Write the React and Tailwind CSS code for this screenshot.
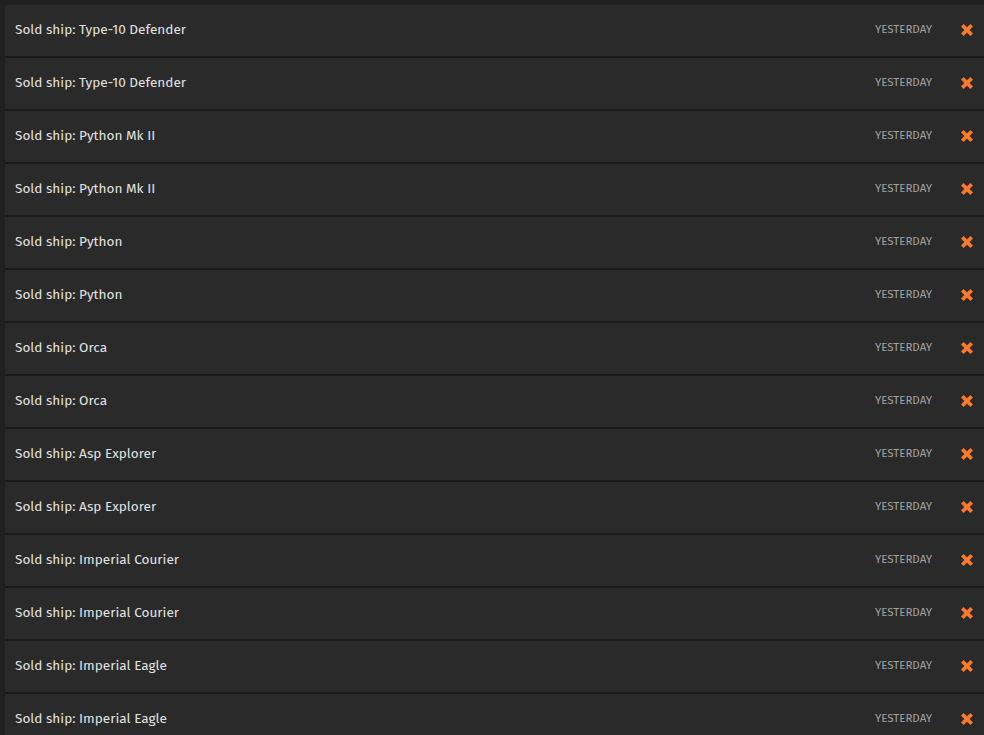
const ships = [
  'Type-10 Defender',
  'Type-10 Defender',
  'Python Mk II',
  'Python Mk II',
  'Python',
  'Python',
  'Orca',
  'Orca',
  'Asp Explorer',
  'Asp Explorer',
  'Imperial Courier',
  'Imperial Courier',
  'Imperial Eagle',
  'Imperial Eagle',
];

function Cross() {
  return (
    <svg width="12" height="12" viewBox="0 0 12 12" className="text-[#ff7b2c] mt-[-1px]">
      <path
        d="M2.6 0.2 L6 3.6 L9.4 0.2 L11.8 2.6 L8.4 6 L11.8 9.4 L9.4 11.8 L6 8.4 L2.6 11.8 L0.2 9.4 L3.6 6 L0.2 2.6 Z"
        fill="currentColor"
        strokeLinejoin="round"
        stroke="currentColor"
        strokeWidth="0.4"
      />
    </svg>
  );
}

export default function App() {
  return (
    <div
      className="min-h-screen bg-[#202020] pt-[5px] pl-[5px] overflow-hidden"
      style={{ fontFamily: '"Fira Sans", "Open Sans", Roboto, sans-serif' }}
    >
      {ships.map((ship, i) => (
        <div
          key={i}
          className="flex items-center h-[53px] bg-[#2a2a2a] border-b-2 border-[#1b1b1b] pl-[10px] pr-[11px]"
        >
          <span className="flex-1 text-[13.6px] leading-none text-[#e2e2e2] mt-[-2px]">Sold ship: {ship}</span>
          <span className="text-[11.5px] leading-none text-[#a0a0a0] uppercase mr-[29px] mt-[-1px]">Yesterday</span>
          <Cross />
        </div>
      ))}
    </div>
  );
}
